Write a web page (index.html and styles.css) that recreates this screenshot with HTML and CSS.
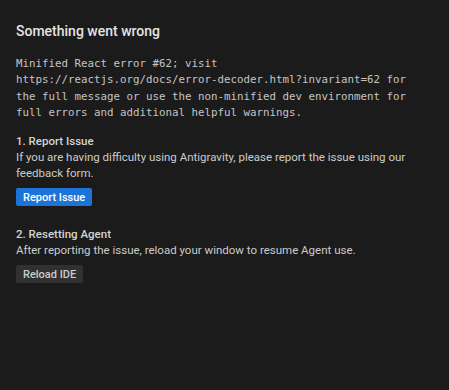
FILE: index.html
```html
<!DOCTYPE html>
<html lang="en">
  <head>
    <meta charset="UTF-8" />
    <title>Something went wrong</title>
    <link rel="stylesheet" href="styles.css">
  </head>
  <body>
    <main class="fejl">
      <h1 class="titel">Something went wrong</h1>
      <pre class="besked">Minified React error #62; visit
https://reactjs.org/docs/error-decoder.html?invariant=62 for
the full message or use the non-minified dev environment for
full errors and additional helpful warnings.</pre>

      <section class="trin">
        <h2>1. Report Issue</h2>
        <p>If you are having difficulty using Antigravity, please report the issue using our feedback form.</p>
        <button class="knap blaa">Report Issue</button>
      </section>

      <section class="trin">
        <h2>2. Resetting Agent</h2>
        <p>After reporting the issue, reload your window to resume Agent use.</p>
        <button class="knap graa">Reload IDE</button>
      </section>
    </main>
  </body>
</html>
```

FILE: styles.css
```css
body {
  margin: 0;
  background-color: #1b1b1b;
  font-family: Roboto, "Noto Sans", sans-serif;
  color: #cccccc;
}

.fejl {
  padding: 21px 16px;
}

.titel {
  font-size: 14px;
  font-weight: 500;
  color: #e4e4e4;
  margin: 0 0 15px 0;
  line-height: 20px;
}

.besked {
  font-family: "DejaVu Sans Mono", "Liberation Mono", monospace;
  font-size: 10.8px;
  line-height: 16.3px;
  color: #c4c4c4;
  margin: 0 0 12px 0;
  white-space: pre;
}

.trin {
  margin-bottom: 20px;
}

.trin h2 {
  font-size: 11.5px;
  font-weight: 500;
  color: #d4d4d4;
  margin: 0;
  line-height: 16px;
}

.trin p {
  font-size: 11.5px;
  line-height: 16px;
  margin: 0 0 7px 0;
  color: #cccccc;
}

.knap {
  display: block;
  font-family: Roboto, "Noto Sans", sans-serif;
  font-size: 11px;
  font-weight: 500;
  border: none;
  border-radius: 2px;
  height: 18px;
  padding: 0 7px;
  cursor: pointer;
}

.blaa {
  background-color: #1c74d9;
  color: #ffffff;
}

.graa {
  background-color: #313131;
  color: #cccccc;
}
```
